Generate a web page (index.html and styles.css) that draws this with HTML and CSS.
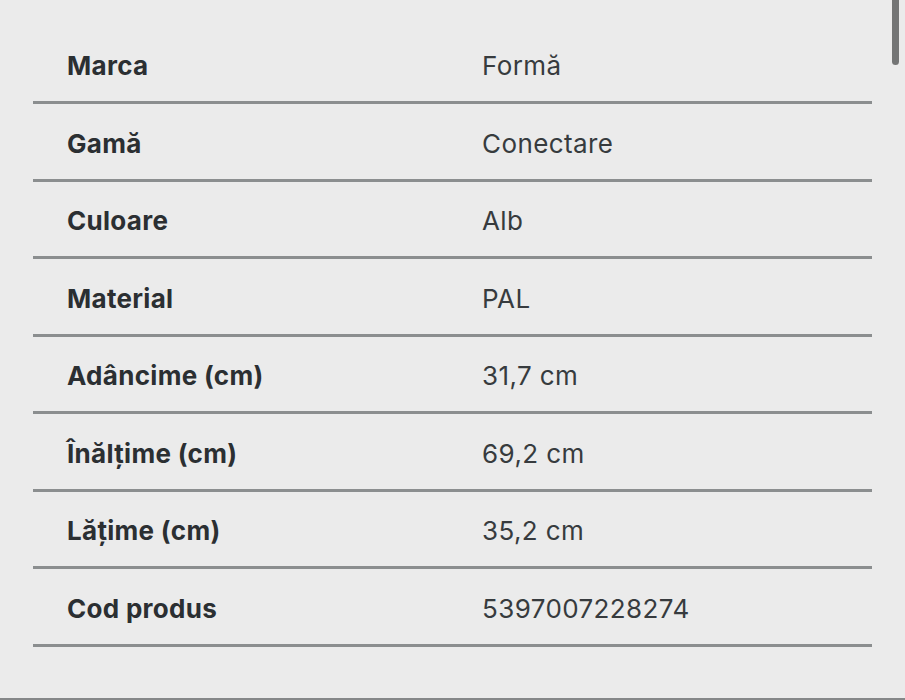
FILE: index.html
```html
<!DOCTYPE html>
<html lang="ro">
<head>
<meta charset="utf-8">
<link rel="stylesheet" href="styles.css">
</head>
<body>
<div class="page">
  <div class="specs">
    <div class="row"><div class="label">Marca</div><div class="value">Formă</div></div>
    <div class="row"><div class="label">Gamă</div><div class="value">Conectare</div></div>
    <div class="row"><div class="label">Culoare</div><div class="value">Alb</div></div>
    <div class="row"><div class="label">Material</div><div class="value">PAL</div></div>
    <div class="row"><div class="label">Adâncime (cm)</div><div class="value">31,7 cm</div></div>
    <div class="row"><div class="label">Înălțime (cm)</div><div class="value">69,2 cm</div></div>
    <div class="row"><div class="label">Lățime (cm)</div><div class="value">35,2 cm</div></div>
    <div class="row"><div class="label">Cod produs</div><div class="value">5397007228274</div></div>
  </div>
  <div class="scroll-thumb"></div>
</div>
</body>
</html>
```

FILE: styles.css
```css
html, body {
  margin: 0;
  padding: 0;
  background: #ebebeb;
}
.page {
  position: relative;
  box-sizing: border-box;
  height: 700px;
  padding: 26.5px 33px 0 33px;
  border-bottom: 2px solid #858788;
  font-family: "Inter", "Liberation Sans", sans-serif;
  overflow: hidden;
}
.specs {
  display: flex;
  flex-direction: column;
}
.row {
  display: grid;
  grid-template-columns: 415px 1fr;
  padding: 23.5px 0 19px 34px;
  border-bottom: 3px solid #8b8e8f;
  font-size: 26px;
  line-height: 32px;
}
.label {
  font-weight: 700;
  letter-spacing: 0.3px;
  color: #2b2f32;
}
.value {
  font-weight: 400;
  letter-spacing: 0.4px;
  color: #373b3e;
}
.scroll-thumb {
  position: absolute;
  top: 0;
  left: 892px;
  width: 7px;
  height: 65px;
  background: #747575;
  border-radius: 0 0 4px 4px;
}
```
